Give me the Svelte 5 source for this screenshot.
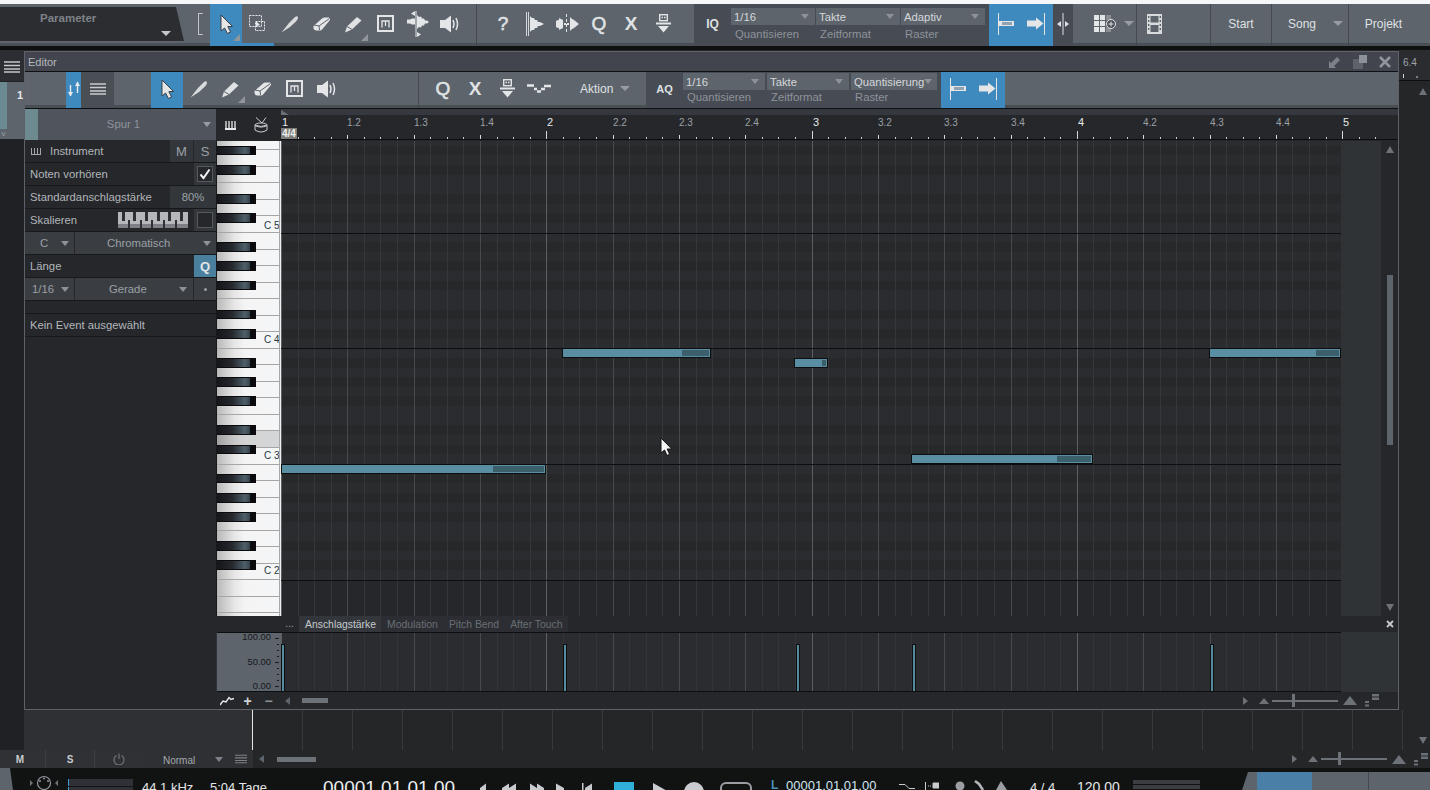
<script>
  const bar = 265.3;
  const gridW = 1060;
  const gridH = 475;
  const octave = 115.75;
  const semi = octave / 12;
  const c5 = 92;
  const blackSet = [1, 3, 6, 8, 10];
  const rows = [];
  for (let s = -36; s < 24; s++) {
    const b = Math.floor(c5 - s * semi);
    const t = Math.floor(c5 - (s + 1) * semi);
    if (b < 0 || t > gridH) continue;
    const m = ((s % 12) + 12) % 12;
    rows.push({ y: t, h: b - t, black: blackSet.includes(m), c: m === 0 });
  }
  const vlines = [];
  for (let i = 0; i * bar / 16 < gridW; i++) {
    const x = Math.round((i * bar) / 16) + 0.5;
    vlines.push({ x, kind: i % 16 === 0 ? 'bar' : i % 4 === 0 ? 'beat' : 'six' });
  }
  const cLines = [0, 1, 2, 3, 4].map((n) => Math.floor(c5 + n * octave) + 0.5).filter((y) => y < gridH);
  const whites = [];
  for (let i = -28; i < 20; i++) {
    const b = c5 - i * (octave / 7);
    const t = c5 - (i + 1) * (octave / 7);
    if (b < 0 || t > gridH) continue;
    whites.push({ y: Math.round(t), h: Math.round(b) - Math.round(t), hi: Math.round(t) >= 289 && Math.round(t) <= 292 });
  }
  const blacks = rows.filter((r) => r.black);
  const labels = [
    { t: 'C 5', y: 88 },
    { t: 'C 4', y: 202 },
    { t: 'C 3', y: 318 },
    { t: 'C 2', y: 433 }
  ];
  const notes = [
    { x: 0, w: 265, v: 211, y: 323 },
    { x: 281, w: 149, v: 119, y: 207 },
    { x: 513, w: 34, v: 27, y: 217 },
    { x: 630, w: 182, v: 145, y: 313 },
    { x: 928, w: 132, v: 106, y: 207 }
  ];
  const velBars = [0, 282, 515, 631, 929];
  const ticks = [];
  for (let i = 0; i * bar / 16 < 1100; i++) {
    const x = Math.round((i * bar) / 16) + 0.5;
    const kind = i % 16 === 0 ? 8 : i % 4 === 0 ? 4 : 2;
    ticks.push({ x, h: kind });
  }
  const rLabels = [];
  for (let i = 0; i <= 16; i++) {
    const b = Math.floor(i / 4);
    const k = i % 4;
    rLabels.push({
      x: Math.round((i * bar) / 4) + (k === 0 ? 1 : 0),
      t: k === 0 ? String(b + 1) : b + 1 + '.' + (k + 1),
      major: k === 0
    });
  }
  const lowerLines = [];
  for (let x = 49; x < 1150; x += 50) lowerLines.push(x);
</script>

{#snippet arrow()}
  <svg width="20" height="22" viewBox="0 0 20 22"><path d="M5 2 L5 18 L8.6 15 L11.4 20.5 L14.6 19 L11.8 13.6 L16.5 13.5 Z" fill="#e4e6e8" stroke="#3c4046" stroke-width="1"/></svg>
{/snippet}
{#snippet select()}
  <svg width="20" height="20" viewBox="0 0 20 20"><rect x="1.5" y="1.5" width="12" height="11" fill="none" stroke="#e6e8ea" stroke-dasharray="2 1"/><rect x="7.5" y="7.5" width="9" height="9" fill="none" stroke="#e6e8ea" stroke-dasharray="2 1"/><path d="M8 7 L12 11 L10 11.5 L8 13 Z" fill="#e6e8ea"/></svg>
{/snippet}
{#snippet knife()}
  <svg width="20" height="20" viewBox="0 0 20 20"><path d="M1.5 18.5 L9 9 L15 3 Q17 1.5 18 3 Q18.5 5 16 7.5 L10 13 Z" fill="#d9dbdd"/></svg>
{/snippet}
{#snippet eraser()}
  <svg width="20" height="20" viewBox="0 0 20 20"><path d="M1.5 12 L10 4.5 Q11 3.5 12.5 3.5 L17 3.5 Q18.5 4 18 6 L10.5 15 Q9.5 16.5 7.5 16.5 L4 16.5 Q1 16 1.5 12 Z" fill="#e3e5e7"/><path d="M2 11 L7 12 L7.5 16 M7 12 L17.5 4.5" stroke="#5d646c" fill="none"/></svg>
{/snippet}
{#snippet pencil()}
  <svg width="20" height="20" viewBox="0 0 20 20"><path d="M1 18.5 L3 12.5 L13 3 L17.5 6.5 L8 15.5 Z" fill="#dfe1e3"/><path d="M3 12.5 L8 15.5" stroke="#5d646c"/></svg>
{/snippet}
{#snippet mute()}
  <svg width="18" height="18" viewBox="0 0 18 18"><rect x="1" y="1" width="15" height="15" fill="none" stroke="#e3e5e7" stroke-width="2"/><path d="M5 12.5 V6 H12 V12.5 M8.5 6 V11" fill="none" stroke="#e3e5e7" stroke-width="1.3"/></svg>
{/snippet}
{#snippet bend()}
  <svg width="22" height="26" viewBox="0 0 22 26"><path d="M9 0 V26" stroke="#e3e5e7"/><path d="M8 0 L4 2.5 L8 5 Z M10 21 L14 23.5 L10 26 Z M0 8.5 H3 L5 7.5 H8 V13.5 H5 L3 12.5 H0 Z" fill="#e3e5e7"/><path d="M10 4 L12 6 L14 5.5 L15 7.5 L17 7.5 L18 9.5 L20 9.5 L22 11 L20 12.5 L18 12.5 L17 14.5 L15 14.5 L14 16.5 L12 16 L10 18 Z" fill="#e3e5e7"/></svg>
{/snippet}
{#snippet speaker()}
  <svg width="22" height="20" viewBox="0 0 22 20"><path d="M1 6 H6 L12 1.5 V18.5 L6 14 H1 Z" fill="#e3e5e7"/><path d="M14 6 Q16 10 14 14 M17 4 Q20 10 17 16" fill="none" stroke="#e3e5e7" stroke-width="1.5"/></svg>
{/snippet}
{#snippet strip1()}
  <svg width="18" height="24" viewBox="0 0 18 24"><path d="M.5 0 V24 M2.5 0 V24" stroke="#e3e5e7" stroke-width=".9"/><path d="M4 4 L6 6 L8 6 L9 8 L11 8 L12 10 L14 10 L18 12 L14 14 L12 14 L11 16 L9 16 L8 18 L6 18 L4 20 Z" fill="#e3e5e7"/></svg>
{/snippet}
{#snippet strip2()}
  <svg width="23" height="22" viewBox="0 0 23 22"><path d="M10.5 1 V21" stroke="#e3e5e7" stroke-dasharray="3 2"/><path d="M0 8 L2 7 H3 V5 L7 7 V15 L3 17 V15 H2 L0 14 Z M8 10 H10 V12 H8 Z M11 10 H13 V12 H11 Z M14 4 L16 6 L18 7 L23 11 L18 15 L16 16 L14 18 Z" fill="#e3e5e7"/></svg>
{/snippet}
{#snippet mic()}
  <svg width="15" height="19" viewBox="0 0 15 19"><rect x="3.7" y=".7" width="7.6" height="6" fill="none" stroke="#e3e5e7" stroke-width="1.4"/><rect x="5.5" y="2.7" width="1.5" height="1.5" fill="#e3e5e7"/><rect x="8" y="2.7" width="1.5" height="1.5" fill="#e3e5e7"/><path d="M0 9.5 H15" stroke="#e3e5e7" stroke-width="2"/><path d="M2 12 H13 L7.5 18.5 Z" fill="#e3e5e7"/></svg>
{/snippet}
{#snippet humanize()}
  <svg width="26" height="10" viewBox="0 0 26 10"><path d="M1 1.5 H8 M8 5 H11 M11 7.5 H15 M15 5 H19 M18 2 H25" stroke="#e3e5e7" stroke-width="2.4"/></svg>
{/snippet}
{#snippet snapL()}
  <svg width="20" height="24" viewBox="0 0 20 24"><path d="M1.5 1 V23" stroke="#e3e5e7"/><rect x="2" y="9" width="15" height="5" fill="#e3e5e7"/><rect x="5" y="10" width="10" height="3" fill="#8fa2b0"/></svg>
{/snippet}
{#snippet snapR()}
  <svg width="20" height="24" viewBox="0 0 20 24"><path d="M18.5 1 V23" stroke="#e3e5e7"/><path d="M1 8.5 H10 V5.5 L17.5 11.5 L10 17.5 V14.5 H1 Z" fill="#e3e5e7"/></svg>
{/snippet}
{#snippet lines(w = 16, c = '#d0d3d6')}
  <svg width={w} height="12" viewBox="0 0 16 12"><path d="M0 1 H16 M0 4.5 H16 M0 8 H16 M0 11 H16" stroke={c} stroke-width="1.6"/></svg>
{/snippet}
{#snippet corner()}
  <svg width="14" height="13" viewBox="0 0 14 13"><rect x="7" y="0" width="7" height="2.5" fill="#6a7077"/><rect x="7" y="3.5" width="7" height="2.5" fill="#6a7077"/><rect x="0" y="7" width="4" height="2" fill="#6a7077"/><rect x="0" y="10.5" width="4" height="2" fill="#6a7077"/></svg>
{/snippet}
{#snippet zoomer(thumb)}
  <span class="zm">
    <i class="tri up small"></i>
    <span class="zm-track"><b style="left:{thumb}px"></b></span>
    <i class="tri up big"></i>
  </span>
{/snippet}

<div class="app">
  <div class="topstrip"></div>

  <header class="toolbar">
    <div class="param"><span class="ptitle">Parameter</span><i class="dd pdd"></i></div>
    <div class="brk"><span></span></div>
    <div class="tb on has-corner">{@render arrow()}</div>
    <div class="tb under">{@render select()}</div>
    <div class="tb">{@render knife()}</div>
    <div class="tb">{@render eraser()}</div>
    <div class="tb has-corner">{@render pencil()}</div>
    <div class="tb">{@render mute()}</div>
    <div class="tb">{@render bend()}</div>
    <div class="tb">{@render speaker()}</div>
    <div class="spacer10"></div>
    <div class="grp-a">
      <div class="tb glyph">?</div>
      <div class="tb">{@render strip1()}</div>
      <div class="tb">{@render strip2()}</div>
      <div class="tb glyph">Q</div>
      <div class="tb glyph xb">X</div>
      <div class="tb">{@render mic()}</div>
    </div>
    <div class="grp-q">
      <span class="q-tag">IQ</span>
      <div class="drops">
        <div class="drop"><div class="dval">1/16<i class="dd"></i></div><div class="dlab">Quantisieren</div></div>
        <div class="drop"><div class="dval">Takte<i class="dd"></i></div><div class="dlab">Zeitformat</div></div>
        <div class="drop"><div class="dval">Adaptiv<i class="dd"></i></div><div class="dlab">Raster</div></div>
      </div>
    </div>
    <div class="snapbox">{@render snapL()}{@render snapR()}</div>
    <div class="sliver">
      <svg width="14" height="22" viewBox="0 0 14 22"><path d="M7 0 V22" stroke="#dfe1e3"/><path d="M5 8 L1 11 L5 14 Z M9 8 L13 11 L9 14 Z" fill="#dfe1e3"/></svg>
    </div>
    <div class="cell-grid">
      <svg width="22" height="18" viewBox="0 0 22 18"><g fill="#e3e5e7"><rect width="5" height="5"/><rect x="6" width="5" height="5"/><rect x="12" width="5" height="5" fill="#8a8f95"/><rect y="6" width="5" height="5"/><rect x="6" y="6" width="5" height="5"/><rect y="12" width="5" height="5"/><rect x="6" y="12" width="5" height="5"/><rect x="12" y="12" width="5" height="5" fill="#8a8f95"/></g><circle cx="17" cy="9" r="4.5" fill="#4a4f55" stroke="#e3e5e7"/><path d="M14.5 9 H19.5 M17 6.5 V11.5" stroke="#e3e5e7"/></svg>
      <i class="dd ddgrid"></i>
    </div>
    <div class="cell-film">
      <svg width="15" height="20" viewBox="0 0 15 20"><path d="M0 0 H15 V20 H0 Z" fill="#d8dadc"/><rect x="3.5" y="2" width="8" height="6.5" fill="#5d646c"/><rect x="3.5" y="11" width="8" height="7" fill="#5d646c"/><g fill="#5d646c"><rect x="1" y="2" width="1.4" height="2"/><rect x="1" y="6" width="1.4" height="2"/><rect x="1" y="10" width="1.4" height="2"/><rect x="1" y="14" width="1.4" height="2"/><rect x="12.6" y="2" width="1.4" height="2"/><rect x="12.6" y="6" width="1.4" height="2"/><rect x="12.6" y="10" width="1.4" height="2"/><rect x="12.6" y="14" width="1.4" height="2"/></g></svg>
    </div>
    <div class="pg pg-start">Start</div>
    <div class="pg pg-song"><span>Song</span><i class="dd"></i></div>
    <div class="pg pg-proj">Projekt</div>
  </header>
  <div class="blackline"></div>

  <main class="work">
    <div class="left-col">
      <div class="burger">{@render lines(16, '#c4c7ca')}</div>
      <div class="trk"><span class="trk-color"><i>v</i></span><span class="trk-num">1</span></div>
    </div>
    <div class="center">
      <div class="center-top"></div>
      <div class="under-win">
        <div class="uw-left"></div>
        <div class="uw-grid">
          {#each lowerLines as x}<span class="ul" style="left:{x}px"></span>{/each}
        </div>
      </div>
    </div>
    <div class="right-col">
      <div class="rc-ruler"><span>6.4</span><svg width="31" height="6"><path d="M4.5 0 V4 M18 2 V4" stroke="#d0d0d0"/></svg></div>
      <div class="rc-body"><i class="tri up mid"></i><i class="tri down mid"></i></div>
    </div>

    <section class="editor">
      <div class="titlebar">
        <span class="ttext">Editor</span>
        <span class="wbtns">
          <svg width="12" height="12" viewBox="0 0 12 12"><path d="M0 5 V12 H7 L5 10 L11 4 L8 1 L2 7 Z" fill="#7c8187"/></svg>
          <svg width="14" height="14" viewBox="0 0 14 14"><rect y="4" width="10" height="10" fill="#5e6369"/><rect x="6" width="8" height="8" fill="#8d9298"/></svg>
          <svg width="12" height="12" viewBox="0 0 12 12"><path d="M1 1 L11 11 M11 1 L1 11" stroke="#90959b" stroke-width="2.6"/></svg>
        </span>
      </div>
      <div class="etools">
        <div class="e-pad1"></div>
        <div class="e-sort"><svg width="14" height="16" viewBox="0 0 14 16"><path d="M3.5 4 V15 M10.5 1 V12" stroke="#e8eaec" stroke-width="1.4"/><path d="M1 11 H6 L3.5 15.5 Z M8 5 H13 L10.5 .5 Z" fill="#e8eaec"/></svg></div>
        <div class="e-list">{@render lines(16, '#c9ccd0')}</div>
        <div class="e-pad2"></div>
        <div class="tb on">{@render arrow()}</div>
        <div class="tb">{@render knife()}</div>
        <div class="tb has-corner">{@render pencil()}</div>
        <div class="tb">{@render eraser()}</div>
        <div class="tb">{@render mute()}</div>
        <div class="tb">{@render speaker()}</div>
        <div class="e-pad3"></div>
        <div class="e-grp">
          <div class="tb glyph">Q</div>
          <div class="tb glyph xb">X</div>
          <div class="tb">{@render mic()}</div>
          <div class="tb">{@render humanize()}</div>
          <div class="aktion"><span>Aktion</span><i class="dd"></i></div>
        </div>
        <div class="grp-q e-q">
          <span class="q-tag">AQ</span>
          <div class="drops">
            <div class="drop d1"><div class="dval">1/16<i class="dd"></i></div><div class="dlab">Quantisieren</div></div>
            <div class="drop d2"><div class="dval">Takte<i class="dd"></i></div><div class="dlab">Zeitformat</div></div>
            <div class="drop d3"><div class="dval">Quantisierung<i class="dd"></i></div><div class="dlab">Raster</div></div>
          </div>
        </div>
        <div class="snapbox">{@render snapL()}{@render snapR()}</div>
      </div>

      <div class="ebody">
        <aside class="panel">
          <div class="sp-head"><span class="sp-color"></span><span class="sp-name">Spur 1</span><i class="dd"></i></div>
          <div class="row">
            <svg class="kbd" width="10" height="8" viewBox="0 0 10 8"><path d="M0 7.5 H10 M.5 1 V8 M3.5 1 V8 M6.5 1 V8 M9.5 1 V8" stroke="#a4a8ac"/></svg>
            <span class="lab">Instrument</span><span class="sq w23">M</span><span class="sq w22">S</span>
          </div>
          <div class="row"><span class="lab pad">Noten vorhören</span><span class="chkcell"><span class="chk"><svg width="12" height="12" viewBox="0 0 12 12"><path d="M1.5 6.5 L4.5 10 L10.5 1.5" fill="none" stroke="#eef0f2" stroke-width="2"/></svg></span></span></div>
          <div class="row"><span class="lab pad">Standardanschlagstärke</span><span class="pct">80%</span></div>
          <div class="row"><span class="lab pad">Skalieren</span>
            <svg class="scale" width="70" height="16" viewBox="0 0 70 16" shape-rendering="crispEdges"><rect width="70" height="16" fill="#b5b7ba"/><rect y="12" width="70" height="4" fill="#7d8084"/><g fill="#2d3034"><rect x="4" width="3" height="9"/><rect x="15" width="3" height="9"/><rect x="27" width="3" height="9"/><rect x="39" width="3" height="9"/><rect x="50" width="3" height="9"/><rect x="62" width="3" height="9"/><rect x="10" y="8" width="2" height="8"/><rect x="22" y="8" width="2" height="8"/><rect x="33" y="8" width="2" height="8"/><rect x="45" y="8" width="2" height="8"/><rect x="57" y="8" width="2" height="8"/></g></svg>
            <span class="chkcell"><span class="chk"></span></span></div>
          <div class="row sel"><span class="sel-a">C<i class="dd"></i></span><span class="sel-b">Chromatisch<i class="dd"></i></span></div>
          <div class="row"><span class="lab pad">Länge</span><span class="qbtn">Q</span></div>
          <div class="row sel"><span class="sel-a sm">1/16<i class="dd"></i></span><span class="sel-c">Gerade<i class="dd"></i></span><span class="dot"><b></b></span></div>
          <div class="row gap"></div>
          <div class="row last"><span class="lab pad">Kein Event ausgewählt</span></div>
        </aside>

        <div class="rollcol">
          <div class="ruler">
            <div class="r-tools">
              <svg width="11" height="9" viewBox="0 0 11 9"><path d="M0 8 H11" stroke="#e8eaec" stroke-width="2"/><path d="M1 0 V8 M4 0 V8 M7 0 V8 M10 0 V8" stroke="#e8eaec" stroke-width="1.3"/></svg>
              <svg width="14" height="17" viewBox="0 0 14 17"><path d="M2 .5 L8 6 M12 .5 L8 6" stroke="#c8cbce"/><path d="M1 8 Q7 11 13 8 V13 Q7 17 1 13 Z" fill="none" stroke="#c8cbce"/><ellipse cx="7" cy="8" rx="6" ry="2" fill="none" stroke="#c8cbce"/></svg>
            </div>
            <div class="r-area">
              <svg class="r-svg" width="1117" height="31" viewBox="0 0 1117 31">
                <rect x="0" y="0" width="1117" height="6" fill="#35383e"/>
                <path d="M0 1 L8 6 H0 Z" fill="#6a6f75"/>
                {#each rLabels as l}
                  <text x={l.x} y="17" class={l.major ? 'rl major' : 'rl'}>{l.t}</text>
                {/each}
                {#each ticks as t}
                  <path d="M{t.x} {30 - t.h} V30" stroke={t.h === 2 ? '#c9c9c9' : '#d9d9d9'} shape-rendering="crispEdges"/>
                {/each}
                <rect x="0" y="19" width="16" height="11" fill="#7d7c78"/>
                <text x="1" y="28" class="sig">4/4</text>
                <rect x="0" y="30" width="1117" height="1" fill="#0c0d0e"/>
              </svg>
            </div>
          </div>

          <div class="rollrow">
            <div class="keys">
              <svg width="65" height="475" viewBox="0 0 65 475">
                <defs>
                  <linearGradient id="wg" x1="0" x2="1" y1="0" y2="0"><stop offset="0" stop-color="#b8b8b8"/><stop offset=".28" stop-color="#e6e6e6"/><stop offset=".45" stop-color="#f4f4f5"/><stop offset="1" stop-color="#f5f6f7"/></linearGradient>
                  <linearGradient id="bk" x1="0" x2="1" y1="0" y2="0"><stop offset="0" stop-color="#15161a"/><stop offset=".45" stop-color="#24272c"/><stop offset=".85" stop-color="#4e606b"/><stop offset="1" stop-color="#34414a"/></linearGradient>
                </defs>
                <rect width="65" height="475" fill="#17181a"/>
                <rect x="1" width="62" height="475" fill="url(#wg)"/>
                {#each whites as k}
                  {#if k.hi}<rect x="1" y={k.y} width="62" height={k.h} fill="#000" fill-opacity=".13"/>{/if}
                  <rect x="1" y={k.y + k.h - 1} width="62" height="1" fill="#a6a6a6"/>
                {/each}
                {#each blacks as k}
                  <path d="M1 {k.y} H40 V{k.y + k.h} H1 Z" fill="#0b0b0d"/>
                  <path d="M1 {k.y + 1} H34 V{k.y + k.h - 1} H1 Z" fill="url(#bk)"/>
                {/each}
                {#each labels as l}
                  <text x="48" y={l.y} class="klabel">{l.t}</text>
                {/each}
                <rect x="63" width="1" height="475" fill="#a8a8a8"/>
                <rect x="64" width="1" height="475" fill="#f0f0f0"/>
              </svg>
            </div>
            <div class="gridwrap">
              <svg class="gridsvg" width="1060" height="475" viewBox="0 0 1060 475" shape-rendering="crispEdges">
                {#each rows as r}
                  <rect x="0" y={r.y} width="1060" height={r.h} fill={r.black ? '#26282a' : '#2a2c30'}/>
                {/each}
                {#each vlines as v}
                  <path d="M{v.x} 0 V475" stroke={v.kind === 'bar' ? '#5c5e62' : v.kind === 'beat' ? '#47494d' : '#35373a'}/>
                {/each}
                {#each cLines as y}
                  <path d="M0 {y} H1060" stroke="#0d0e0f"/>
                {/each}
              </svg>
              {#each notes as n}
                <div class="note" style="left:{n.x}px;top:{n.y}px;width:{n.w}px"><span class="tail" style="left:{n.v}px"></span></div>
              {/each}
              <svg class="cursor" width="14" height="20" viewBox="0 0 14 20"><path d="M1 1 V16 L4.5 13 L7 18.5 L9.6 17.3 L7.2 12 H11.8 Z" fill="#f4f4f4" stroke="#111" stroke-width="1"/></svg>
            </div>
            <div class="gutter"></div>
            <div class="vscroll"><i class="tri up mid"></i><span class="vthumb"></span><i class="tri down mid"></i></div>
          </div>

          <div class="tabs">
            <span class="dots">...</span>
            <span class="tab act">Anschlagstärke</span>
            <span class="tab">Modulation</span>
            <span class="tab">Pitch Bend</span>
            <span class="tab">After Touch</span>
            <span class="tabx"><svg width="8" height="8" viewBox="0 0 8 8"><path d="M1 1 L7 7 M7 1 L1 7" stroke="#c8cbce" stroke-width="1.8"/></svg></span>
          </div>

          <div class="lane">
            <div class="scale-col">
              <span class="sv">100.00</span><span class="sv">50.00</span><span class="sv">0.00</span>
              <svg class="scale-ticks" width="6" height="59"><path d="M1 5.5 H5 M3 11.5 H5 M3 17.5 H5 M3 23.5 H5 M1 29.5 H5 M3 35.5 H5 M3 41.5 H5 M3 47.5 H5 M1 53.5 H5" stroke="#1a1c1e"/></svg>
            </div>
            <div class="lanegrid">
              <svg width="1060" height="60" viewBox="0 0 1060 60" shape-rendering="crispEdges">
                <rect width="1060" height="60" fill="#2a2c30"/>
                {#each vlines as v}
                  <path d="M{v.x} 0 V60" stroke={v.kind === 'bar' ? '#5c5e62' : v.kind === 'beat' ? '#47494d' : '#33353a'}/>
                {/each}
                <path d="M0 .5 H1060 M0 59.5 H1060" stroke="#0d0e0f"/>
              </svg>
              {#each velBars as x}<span class="vel" style="left:{x}px"></span>{/each}
            </div>
            <div class="lanegutter"></div>
          </div>

          <div class="lctl">
            <span class="lc-icons">
              <svg width="14" height="10" viewBox="0 0 14 10"><path d="M0 9 L3 5 L6 6 L9 1.5 L11 3.5 L14 2.5" fill="none" stroke="#e8eaec" stroke-width="1.4"/></svg>
              <b class="pm">+</b><b class="pm minus">−</b>
              <i class="tri left"></i><span class="hthumb t1"></span>
            </span>
            <span class="lc-right">
              <i class="tri right"></i>
              {@render zoomer(20)}
              {@render corner()}
            </span>
          </div>
        </div>
      </div>
    </section>
  </main>

  <div class="status">
    <div class="st-left">
      <span class="st-b b1">M</span><span class="st-b b2">S</span>
      <span class="st-b b3"><svg width="12" height="12" viewBox="0 0 12 12"><path d="M3.5 2.5 A5 5 0 1 0 8.5 2.5 M6 .5 V6" fill="none" stroke="#6d7278" stroke-width="1.2"/></svg></span>
      <span class="st-normal">Normal</span><i class="dd"></i>
      <span class="st-lines">{@render lines(12, '#7c8187')}</span>
      <i class="tri left"></i><span class="hthumb t2"></span>
    </div>
    <div class="st-right">
      <i class="tri right"></i>
      {@render zoomer(17)}
      {@render corner()}
    </div>
  </div>

  <footer class="transport">
    <span class="slant"></span>
    <svg class="midi" width="30" height="22" viewBox="0 0 30 22"><path d="M1 12 L4 15 L1 18 Z M29 12 L26 15 L29 18 Z" fill="#6c7177"/><circle cx="15" cy="15" r="6.5" fill="none" stroke="#90949a" stroke-width="1.2"/><g fill="#90949a"><circle cx="15" cy="10.5" r="1"/><circle cx="11" cy="13" r="1"/><circle cx="19" cy="13" r="1"/></g></svg>
    <span class="meter"><b></b><b></b></span>
    <span class="t-txt khz">44.1 kHz</span>
    <span class="t-txt tage">5:04 Tage</span>
    <span class="bigtime">00001.01.01.00</span>
    <svg class="tctl" width="124" height="22" viewBox="0 0 124 22" fill="#c8cbce"><path d="M0 20 L6 15.5 V22 H0 Z M22 20 L29 15.5 V22 H22 Z M29 20 L36 15.5 V22 H29 Z M50 15.5 L57 20 V22 H50 Z M57 15.5 L64 20 V22 H57 Z M76 15.5 L84 20 V22 H76 Z M102 15 H103.5 V22 H102 Z M105 20 L112 15.5 V22 H105 Z"/></svg>
    <span class="stopb"></span>
    <svg class="playb" width="16" height="22" viewBox="0 0 16 22"><path d="M0 15 L16 24 H0 Z" fill="#c9ccd0"/></svg>
    <span class="recb"></span>
    <span class="loopb"></span>
    <span class="t-l">L</span>
    <span class="t-time">00001.01.01.00</span>
    <svg class="t-ic" width="40" height="22" viewBox="0 0 40 22" fill="none" stroke="#c8cbce"><path d="M0 16.5 H6 L10 20.5 H16"/><path d="M26.5 14 V22 M34 15 H40 V20 H34 Z" fill="#c8cbce"/><path d="M29 18 H33" stroke-dasharray="1 1"/></svg>
    <svg class="t-ic2" width="58" height="22" viewBox="0 0 58 22"><circle cx="5" cy="18" r="4.5" fill="#9a9ea3"/><path d="M20 13 L24 16 L28 22" stroke="#b0b3b7" stroke-width="2.6" fill="none"/><path d="M41 22 L46 13 L52 22 Z" fill="#9a9ea3"/></svg>
    <span class="t-sig">4 / 4</span>
    <span class="t-bpm">120.00</span>
    <span class="meter2"><b></b><b></b></span>
    <span class="t-tabs"><span class="tt-sl"></span><span class="tt-blue"></span><span class="tt-g1"></span><span class="tt-g2"></span></span>
  </footer>
</div>

<style>
  :global(body) { margin: 0; background: #111; }
  .app { width: 1430px; height: 790px; overflow: hidden; display: flex; flex-direction: column; font-family: "Liberation Sans", Arial, sans-serif; font-size: 11.3px; color: #b6babe; background: #242628; }
  i { display: inline-block; font-style: normal; }
  .topstrip { height: 4px; background: #f6f7f9; flex: none; }
  .toolbar { height: 42px; flex: none; display: flex; background: #5d646c; box-shadow: inset 0 -3px 0 #4a4e55; }
  .blackline { height: 4px; background: #0f1110; flex: none; }
  .tb { width: 32px; flex: none; display: flex; align-items: center; justify-content: center; position: relative; padding-bottom: 3px; box-sizing: border-box; }
  .tb.on { background: #3e8abf; }
  .tb.under { box-shadow: inset 0 -3px 0 #3e8abf; }
  .tb.has-corner::after { content: ""; position: absolute; right: 2px; bottom: 5px; border-left: 7px solid transparent; border-bottom: 7px solid #8f959b; }
  .glyph { font-size: 19px; color: #dfe1e3; -webkit-text-stroke: .6px #dfe1e3; }
  .glyph.xb { font-weight: 700; -webkit-text-stroke: 0; }
  .dd { width: 0; height: 0; border-left: 5px solid transparent; border-right: 5px solid transparent; border-top: 5px solid #979ca2; }

  .param { width: 190px; flex: none; box-sizing: border-box; position: relative; display: flex; }
  .param::before { content: ""; position: absolute; left: 0; top: 3px; width: 184px; height: 34px; background: #2b2d31; clip-path: polygon(0 0, 176px 0, 184px 100%, 0 100%); }
  .ptitle { position: relative; margin: 8px 0 0 40px; font-weight: 700; font-size: 11.5px; color: #7f8388; }
  .pdd { position: absolute; left: 161px; top: 27px; border-top-color: #c5c7ca; }
  .brk { width: 20px; flex: none; display: flex; align-items: center; justify-content: center; padding-bottom: 3px; box-sizing: border-box; }
  .brk span { width: 4px; height: 20px; border: 1px solid #c4c7ca; border-right: 0; border-radius: 1px; margin-left: 1px; }
  .spacer10 { width: 10px; flex: none; border-right: 1px solid #454a50; }
  .grp-a { width: 217px; flex: none; display: flex; padding-left: 10px; box-sizing: border-box; }
  .grp-q { width: 295px; flex: none; background: #474b54; display: flex; }
  .q-tag { width: 37px; flex: none; display: flex; align-items: center; justify-content: center; font-weight: 700; font-size: 12px; color: #dfe1e3; padding-bottom: 2px; box-sizing: border-box; }
  .drops { display: flex; gap: 1px; padding-top: 4px; }
  .drop { width: 84px; }
  .dval { height: 17px; background: #5d646c; color: #d5d7da; line-height: 16px; padding: 0 3px; display: flex; align-items: center; justify-content: space-between; box-sizing: border-box; }
  .dval .dd { margin-right: 3px; border-left-width: 4px; border-right-width: 4px; border-top-color: #8d9298; }
  .dlab { color: #8e939a; padding: 3px 0 0 4px; }
  .snapbox { width: 64px; flex: none; background: #3e8abf; display: flex; align-items: center; gap: 9px; padding: 0 0 2px 8px; box-sizing: border-box; }
  .sliver { width: 20px; flex: none; background: #474b54; display: flex; align-items: center; justify-content: center; padding-bottom: 3px; box-sizing: border-box; }
  .cell-grid { width: 64px; flex: none; display: flex; align-items: center; padding: 0 0 3px 21px; box-sizing: border-box; gap: 2px; border-right: 1px solid #454a50; }
  .ddgrid { margin-left: 6px; }
  .cell-film { width: 74px; flex: none; display: flex; align-items: center; padding: 0 0 3px 10px; box-sizing: border-box; border-right: 1px solid #454a50; }
  .pg { flex: none; display: flex; align-items: center; justify-content: center; color: #dfe1e3; font-size: 12px; box-sizing: border-box; padding-bottom: 3px; border-right: 1px solid #454a50; }
  .pg-start { width: 61px; }
  .pg-song { width: 77px; justify-content: flex-start; padding-left: 16px; gap: 17px; }
  .pg-proj { flex: 1; border: 0; padding-right: 12px; }

  .work { flex: none; height: 700px; position: relative; display: flex; }
  .left-col { width: 24px; flex: none; background: #1f2124; }
  .burger { height: 31px; background: #2c2e33; display: flex; align-items: center; justify-content: center; box-sizing: border-box; padding-top: 3px; }
  .trk { height: 57px; margin-top: 1px; background: #5d646c; position: relative; display: flex; }
  .trk-color { width: 7px; background: #6c8a91; position: relative; }
  .trk-color i { position: absolute; left: 0; right: 0; bottom: 0; height: 10px; background: #5d646c; color: #9ba0a5; font-size: 8px; line-height: 9px; text-align: center; }
  .trk-num { margin: 7px 0 0 10px; font-weight: 700; color: #e6e8ea; font-size: 11px; }
  .center { flex: 1; display: flex; flex-direction: column; }
  .center-top { height: 660px; flex: none; }
  .under-win { flex: 1; display: flex; }
  .uw-left { width: 228px; flex: none; background: #2e3034; border-right: 1px solid #e6e6e6; }
  .uw-grid { flex: 1; position: relative; background: #242628; }
  .ul { position: absolute; top: 0; bottom: 0; width: 1px; background: #37393d; }
  .right-col { width: 31px; flex: none; background: #242628; display: flex; flex-direction: column; }
  .rc-ruler { height: 31px; box-sizing: border-box; padding: 7px 0 0 4px; border-bottom: 1px solid #0d0e0f; background: #2a2c30; position: relative; font-size: 10px; color: #9ea2a7; display: flex; flex-direction: column; justify-content: space-between; }
  .rc-ruler svg { margin-left: -4px; display: block; }
  .rc-body { flex: 1; display: flex; flex-direction: column; justify-content: space-between; align-items: flex-end; padding: 7px 3px 6px 0; }

  .editor { position: absolute; left: 24px; top: 1px; width: 1375px; height: 659px; box-sizing: border-box; border: 1px solid #5e6268; display: flex; flex-direction: column; background: #25272b; }
  .titlebar { height: 19px; flex: none; background: #42454e; display: flex; align-items: center; justify-content: space-between; border-bottom: 1px solid #0f1012; box-sizing: content-box; }
  .ttext { margin-left: 3px; color: #b5b9bd; font-size: 11px; }
  .wbtns { display: flex; align-items: center; gap: 12px; padding-right: 7px; }
  .etools { height: 36px; flex: none; display: flex; background: #5d646c; box-shadow: inset 0 -3px 0 #4a4e55; border-bottom: 1px solid #0f1012; box-sizing: content-box; }
  .e-pad1 { width: 41px; flex: none; }
  .e-sort { width: 15px; flex: none; background: #3e8abf; display: flex; align-items: center; justify-content: center; padding-bottom: 2px; box-sizing: border-box; }
  .e-list { width: 33px; flex: none; background: #4a4e55; display: flex; align-items: center; justify-content: center; padding-bottom: 3px; box-sizing: border-box; }
  .e-pad2 { width: 37px; flex: none; }
  .e-pad3 { width: 75px; flex: none; border-right: 1px solid #454a50; box-sizing: content-box; }
  .e-grp { width: 227px; flex: none; display: flex; padding-left: 8px; box-sizing: border-box; }
  .aktion { display: flex; align-items: center; gap: 7px; padding: 0 0 3px 25px; color: #dfe1e3; font-size: 12px; }
  .e-q { width: 295px; }
  .e-q .q-tag { width: 37px; font-size: 11px; }
  .e-q .drops { padding-top: 1px; gap: 2px; }
  .d1, .d2 { width: 82px; }
  .d3 { width: 86px; }
  .e-q .dlab { padding-top: 1px; }
  .e-q .dval { background: #5d646c; }

  .ebody { flex: 1; display: flex; min-height: 0; }
  .panel { width: 191px; flex: none; background: #25272b; display: flex; flex-direction: column; }
  .sp-head { height: 31px; flex: none; background: #50545c; display: flex; align-items: center; position: relative; box-sizing: border-box; }
  .sp-color { width: 13px; height: 100%; background: #6d8a90; }
  .sp-name { flex: 1; text-align: center; color: #8e9399; padding: 0 7px 2px 0; }
  .sp-head .dd { position: absolute; right: 5px; top: 13px; border-left-width: 4px; border-right-width: 4px; }
  .row { height: 23px; flex: none; box-sizing: border-box; border-bottom: 1px solid #17181a; display: flex; align-items: center; position: relative; }
  .row .lab { color: #b2b6ba; flex: 1; }
  .row .lab.pad { padding-left: 5px; }
  .kbd { margin: 0 9px 0 6px; flex: none; }
  .sq { height: 100%; background: #33373b; display: flex; align-items: center; justify-content: center; font-size: 13px; color: #9ba0a5; box-sizing: border-box; margin-left: 1px; }
  .w23 { width: 23px; }
  .w22 { width: 22px; }
  .chkcell { width: 22px; height: 100%; background: #33373b; display: flex; align-items: center; justify-content: center; flex: none; }
  .chk { width: 16px; height: 16px; border: 1px solid #55595e; box-sizing: border-box; background: #25272b; display: flex; align-items: center; justify-content: center; }
  .pct { width: 46px; height: 100%; background: #33373b; display: flex; align-items: center; justify-content: center; color: #9ba0a5; flex: none; }
  .scale { margin-right: 6px; flex: none; }
  .sel { background: #3a3e43; color: #9ba0a5; }
  .sel-a { width: 50px; height: 100%; display: flex; align-items: center; box-sizing: border-box; padding: 0 5px 0 15px; justify-content: space-between; border-right: 1px solid #25272b; flex: none; }
  .sel-a.sm { padding-left: 7px; }
  .sel-a .dd, .sel-b .dd, .sel-c .dd { border-left-width: 4px; border-right-width: 4px; border-top-color: #8d9298; }
  .sel-b { flex: 1; height: 100%; display: flex; align-items: center; justify-content: space-between; padding: 0 5px 0 32px; box-sizing: border-box; }
  .sel-c { flex: 1; height: 100%; display: flex; align-items: center; justify-content: space-between; padding: 0 6px 0 34px; box-sizing: border-box; border-right: 1px solid #25272b; }
  .dot { width: 22px; display: flex; align-items: center; justify-content: center; flex: none; }
  .dot b { width: 3px; height: 3px; background: #9ba0a5; border-radius: 50%; display: block; }
  .qbtn { width: 22px; height: 100%; background: #4a7f9e; color: #e3e5e7; font-weight: 700; font-size: 13px; display: flex; align-items: center; justify-content: center; flex: none; }
  .gap { height: 13px; }
  .last { height: 23px; }

  .rollcol { flex: 1; display: flex; flex-direction: column; min-width: 0; }
  .ruler { height: 32px; flex: none; display: flex; background: #25272b; }
  .r-tools { width: 65px; flex: none; display: flex; align-items: center; gap: 18px; padding: 0 0 0 9px; box-sizing: border-box; }
  .r-area { flex: 1; overflow: hidden; }
  .r-svg { display: block; }
  .rl { font: 10px "Liberation Sans", sans-serif; fill: #9ba0a5; }
  .rl.major { font-size: 11px; fill: #e6e8ea; }
  .sig { font: 700 10px "Liberation Sans", sans-serif; fill: #f0f0f0; }

  .rollrow { height: 475px; flex: none; display: flex; }
  .keys { width: 65px; flex: none; }
  .keys svg { display: block; }
  .klabel { font: 10px "Liberation Sans", sans-serif; fill: #24363f; }
  .gridwrap { width: 1060px; flex: none; position: relative; overflow: hidden; }
  .gridsvg { display: block; }
  .note { position: absolute; height: 10px; box-sizing: border-box; background: #5a8fa3; border: 1px solid #0c0d0e; }
  .tail { position: absolute; top: 1px; bottom: 1px; right: 1px; background: #3c5f6c; }
  .cursor { position: absolute; left: 379px; top: 296px; }
  .gutter { width: 40px; flex: none; background: #2f3336; }
  .vscroll { flex: 1; background: #25272b; display: flex; flex-direction: column; align-items: center; position: relative; padding: 5px 0; box-sizing: border-box; justify-content: space-between; }
  .vthumb { position: absolute; left: 6px; top: 134px; width: 6px; height: 170px; background: #5d646c; }

  .tabs { height: 16px; flex: none; display: flex; align-items: stretch; background: #25272b; font-size: 10.4px; position: relative; }
  .dots { width: 83px; flex: none; text-align: right; padding: 2px 5px 0 0; box-sizing: border-box; color: #9ba0a5; }
  .tab { background: #2c2e33; color: #696e74; padding: 1px 5px 0 6px; display: flex; align-items: center; height: 16px; box-sizing: border-box; }
  .tab.act { background: #33373c; color: #c6cacd; }
  .tabx { position: absolute; right: 4px; top: 4px; display: flex; }
  .tabx svg { display: block; }

  .lane { height: 60px; flex: none; display: flex; background: #2f3336; }
  .scale-col { width: 64px; flex: none; box-sizing: border-box; margin-left: 1px; background: #5d646c; border-top: 1px solid #0d0e0f; border-bottom: 1px solid #0d0e0f; display: flex; flex-direction: column; justify-content: space-between; align-items: flex-end; padding: 0 10px 0 0; position: relative; font-size: 9.4px; color: #17181a; line-height: 10px; }
  .sv:first-child { margin-top: -1px; }
  .scale-ticks { position: absolute; right: 1px; top: 0; }
  .lanegrid { width: 1060px; flex: none; position: relative; }
  .lanegrid svg { display: block; }
  .vel { position: absolute; top: 12px; bottom: 1px; width: 4px; box-sizing: border-box; background: #558b9f; border: 1px solid #0d0e0f; border-bottom: 0; }
  .lanegutter { flex: 1; }

  .lctl { flex: 1; display: flex; align-items: center; justify-content: space-between; background: #25272b; }
  .lc-icons { display: flex; align-items: center; padding-left: 4px; }
  .pm { width: 21px; text-align: center; color: #d0d3d6; font-size: 14px; font-weight: 700; line-height: 14px; }
  .pm.minus { color: #8d9298; }
  .lc-icons .pm:first-of-type { margin-left: 3px; }
  .tri { width: 0; height: 0; flex: none; }
  .tri.up { border-left: 5px solid transparent; border-right: 5px solid transparent; border-bottom: 7px solid #6d7278; }
  .tri.down { border-left: 5px solid transparent; border-right: 5px solid transparent; border-top: 7px solid #6d7278; }
  .tri.up.small { border-bottom-width: 6px; }
  .tri.up.big { border-left-width: 7px; border-right-width: 7px; border-bottom-width: 9px; }
  .tri.mid { border-left-width: 4px; border-right-width: 4px; }
  .tri.left { border-top: 4px solid transparent; border-bottom: 4px solid transparent; border-right: 5px solid #5d646c; }
  .tri.right { border-top: 4px solid transparent; border-bottom: 4px solid transparent; border-left: 5px solid #6d7278; }
  .lc-icons .tri.left { margin-left: 6px; }
  .hthumb { height: 5px; background: #6d7278; display: block; flex: none; }
  .t1 { width: 26px; margin-left: 12px; }
  .t2 { width: 39px; margin-left: 13px; }
  .lc-right { display: flex; align-items: center; padding-right: 19px; }
  .lc-right .tri.right { margin-right: 11px; }
  .zm { display: inline-flex; align-items: center; gap: 3px; margin-right: 8px; }
  .zm-track { width: 66px; height: 2px; background: #6d7278; position: relative; display: block; flex: none; margin-right: 2px; }
  .zm-track b { position: absolute; top: -6px; width: 3px; height: 13px; background: #6d7278; }

  .status { height: 18px; flex: none; display: flex; justify-content: space-between; font-size: 10px; background: #242628; }
  .st-left { width: 253px; background: #2e3034; display: flex; align-items: center; box-sizing: border-box; position: relative; }
  .st-left .dd { margin-left: 12px; border-left-width: 4px; border-right-width: 4px; border-top-color: #7c8187; flex: none; }
  .st-b { height: 100%; flex: none; display: flex; align-items: center; justify-content: center; color: #c8cbce; font-weight: 700; border-right: 1px solid #3c3e42; box-sizing: border-box; background: #2f3135; }
  .b1 { width: 46px; padding-right: 5px; }
  .b2 { width: 49px; }
  .b3 { width: 48px; border-right: 0; }
  .st-normal { margin-left: 20px; color: #a4a8ad; width: 40px; flex: none; padding-top: 2px; }
  .st-lines { margin: 0 12px; display: flex; flex: none; }
  .st-right { display: flex; align-items: center; padding-right: 2px; }
  .st-right .tri.right { margin-right: 11px; }

  .transport { height: 22px; flex: none; background: #111212; display: flex; color: #e3e5e7; position: relative; overflow: hidden; }
  .slant { width: 13px; flex: none; background: #5d646c; clip-path: polygon(0 0, 10px 0, 13px 100%, 0 100%); }
  .midi { margin-left: 16px; flex: none; }
  .meter { width: 65px; margin-left: 9px; flex: none; display: flex; flex-direction: column; gap: 1px; padding-top: 11px; box-sizing: border-box; }
  .meter b { display: block; height: 7px; background: #2e3236; border-left: 1px solid #3e9bd0; flex: none; }
  .t-txt { font-size: 13px; padding-top: 12px; flex: none; }
  .khz { margin-left: 9px; width: 68px; }
  .tage { width: 113px; }
  .bigtime { font-size: 19px; padding-top: 9px; flex: none; width: 157px; color: #eceeef; }
  .tctl { flex: none; }
  .stopb { width: 20px; height: 8px; margin: 14px 0 0 10px; background: #2fb0d8; flex: none; }
  .playb { margin-left: 19px; flex: none; }
  .recb { width: 20px; height: 20px; border-radius: 50%; background: #c9ccd0; margin: 14px 0 0 15px; flex: none; }
  .loopb { width: 32px; height: 20px; border: 2px solid #9a9ea3; border-radius: 6px; margin: 14px 0 0 16px; box-sizing: border-box; flex: none; }
  .t-l { margin-left: 19px; color: #4a8fb5; font-size: 12px; padding-top: 10px; width: 15px; font-weight: 700; flex: none; }
  .t-time { font-size: 13px; padding-top: 10px; width: 113px; color: #cfe3ee; flex: none; }
  .t-ic { flex: none; }
  .t-ic2 { margin-left: 16px; flex: none; }
  .t-sig { width: 47px; margin-left: 17px; font-size: 13px; padding-top: 12px; flex: none; }
  .t-bpm { width: 56px; font-size: 14px; padding-top: 11px; flex: none; }
  .meter2 { width: 67px; flex: none; display: flex; flex-direction: column; gap: 1px; padding-top: 12px; box-sizing: border-box; }
  .meter2 b { display: block; height: 4px; background: #3a3d41; flex: none; }
  .t-tabs { flex: 1; margin-left: 42px; display: flex; margin-top: 4px; }
  .tt-sl { width: 15px; background: #5d646c; clip-path: polygon(6px 0, 100% 0, 100% 100%, 0 100%); }
  .tt-blue { width: 55px; background: #4a80a8; }
  .tt-g1 { width: 56px; background: #5d646c; border-right: 1px solid #454a50; }
  .tt-g2 { flex: 1; background: #5d646c; }
</style>
